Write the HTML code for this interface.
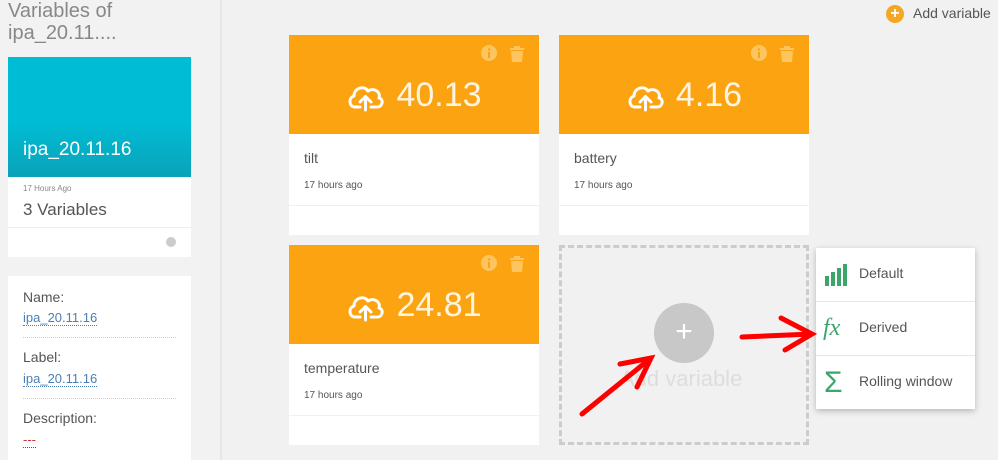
<!DOCTYPE html>
<html><head><meta charset="utf-8"><style>
*{margin:0;padding:0;box-sizing:border-box}
body{width:998px;height:460px;overflow:hidden;background:#f1f1f1;font-family:"Liberation Sans",sans-serif;position:relative;color:#555}
.side{position:absolute;left:0;top:0;width:222px;height:460px;background:#f2f2f2;border-right:2px solid #e6e6e6}
.abs{position:absolute}
.card{position:absolute;width:250px;height:200px;background:#fff}
.card .top{height:99px;background:#fca311;position:relative}
.card .val{position:absolute;left:0;right:0;top:40px;text-align:center;color:#fff4e0;font-size:34px;line-height:40px}
.card .val svg{vertical-align:-6px;margin-right:10px}
.card .ic{position:absolute;top:10px;right:14px}
.card .name{position:absolute;left:15px;top:115px;font-size:14px;color:#555}
.card .time{position:absolute;left:15px;top:145px;font-size:10px;color:#555}
.card .sep{position:absolute;left:0;right:0;top:170px;border-top:1px solid #f0f0f0}
.menu{position:absolute;left:816px;top:248px;width:159px;height:161px;background:#fff;box-shadow:0 2px 6px rgba(0,0,0,.25)}
.mi{height:54px;border-bottom:1px solid #e6e6e6;position:relative;font-size:14px;color:#555}
.mi span{position:absolute;left:43px;top:17px}
.lbl{font-size:14px;color:#555}
.lnk{font-size:13px;color:#4a7fb5;border-bottom:1px dotted #4a7fb5}
</style></head><body>
<div class="side">
<div class="abs" style="left:8px;top:0;font-size:20px;color:#888;line-height:22px">Variables of<br>ipa_20.11....</div>
<div class="abs" style="left:8px;top:57px;width:183px;height:120px;background:linear-gradient(#00bcd4 0%,#00bcd4 55%,#0aa2b8 100%)"></div>
<div class="abs" style="left:23px;top:139px;font-size:19px;color:#fff">ipa_20.11.16</div>
<div class="abs" style="left:8px;top:177px;width:183px;height:80px;background:#fff"></div>
<div class="abs" style="left:23px;top:184px;font-size:8px;color:#888">17 Hours Ago</div>
<div class="abs" style="left:23px;top:200px;font-size:17px;color:#555">3 Variables</div>
<div class="abs" style="left:8px;top:227px;width:183px;border-top:1px solid #eee"></div>
<div class="abs" style="left:166px;top:237px;width:10px;height:10px;border-radius:50%;background:#ccc"></div>
<div class="abs" style="left:8px;top:276px;width:183px;height:184px;background:#fff"></div>
<div class="abs lbl" style="left:23px;top:289px">Name:</div>
<div class="abs lnk" style="left:23px;top:310px">ipa_20.11.16</div>
<div class="abs" style="left:23px;top:337px;width:153px;border-top:1px dotted #ccc"></div>
<div class="abs lbl" style="left:23px;top:349px">Label:</div>
<div class="abs lnk" style="left:23px;top:371px">ipa_20.11.16</div>
<div class="abs" style="left:23px;top:398px;width:153px;border-top:1px dotted #ccc"></div>
<div class="abs lbl" style="left:23px;top:410px">Description:</div>
<div class="abs" style="left:23px;top:432px;font-size:13px;color:#c33;border-bottom:1px dotted #555">---</div>
</div>

<div class="abs" style="left:886px;top:5px;width:18px;height:18px;border-radius:50%;background:#f5a623;color:#fff;font-size:16px;line-height:18px;text-align:center;font-weight:bold">+</div>
<div class="abs" style="left:913px;top:5px;font-size:14px;color:#555">Add variable</div>

<svg width="0" height="0" style="position:absolute"><defs>
<g id="cloud"><path d="M14 27 H9 C3 27 2 18 8 16 C8 8 18 5 22 11 C28 7 35 12 33 18 C38 19 37 27 31 27 H25" fill="none" stroke="#fff" stroke-width="3" stroke-linecap="round" stroke-linejoin="round"/><path d="M19.5 30 V17 M14 22 L19.5 16.5 L25 22" fill="none" stroke="#fff" stroke-width="3" stroke-linecap="round" stroke-linejoin="round"/></g>
<g id="icons"><circle cx="8" cy="8" r="8" fill="#fdc55f"/><rect x="7" y="7" width="2" height="6" fill="#fca311"/><circle cx="8" cy="4.5" r="1.2" fill="#fca311"/><rect x="29" y="3" width="14" height="2" fill="#fdc55f"/><rect x="33" y="1" width="6" height="2" fill="#fdc55f"/><path d="M30 6 H42 L41 17 H31Z" fill="#fdc55f"/></g>
</defs></svg>

<div class="card" style="left:289px;top:35px"><div class="top"><svg class="ic" width="44" height="18"><use href="#icons"/></svg><div class="val"><svg width="40" height="32"><use href="#cloud"/></svg>40.13</div></div><div class="name">tilt</div><div class="time">17 hours ago</div><div class="sep"></div></div>
<div class="card" style="left:559px;top:35px"><div class="top"><svg class="ic" width="44" height="18"><use href="#icons"/></svg><div class="val"><svg width="40" height="32"><use href="#cloud"/></svg>4.16</div></div><div class="name">battery</div><div class="time">17 hours ago</div><div class="sep"></div></div>
<div class="card" style="left:289px;top:245px"><div class="top"><svg class="ic" width="44" height="18"><use href="#icons"/></svg><div class="val"><svg width="40" height="32"><use href="#cloud"/></svg>24.81</div></div><div class="name">temperature</div><div class="time">17 hours ago</div><div class="sep"></div></div>

<div class="abs" style="left:559px;top:245px;width:250px;height:200px;border:3px dashed #ccc"></div>
<div class="abs" style="left:620px;top:366px;font-size:22px;color:#ddd">Add variable</div>
<div class="abs" style="left:654px;top:303px;width:60px;height:60px;border-radius:50%;background:#c8c8c8;color:#fff;font-size:30px;line-height:58px;text-align:center">+</div>

<div class="menu">
<div class="mi"><svg class="abs" style="left:9px;top:14px" width="22" height="26"><rect x="0" y="14" width="4" height="10" fill="#3aa66a"/><rect x="6" y="10" width="4" height="14" fill="#3aa66a"/><rect x="12" y="6" width="4" height="18" fill="#3aa66a"/><rect x="18" y="2" width="4" height="22" fill="#3aa66a"/></svg><span>Default</span></div>
<div class="mi"><div class="abs" style="left:7px;top:13px;font-family:'Liberation Serif',serif;font-style:italic;font-size:24px;color:#3aa66a">fx</div><span>Derived</span></div>
<div class="mi" style="border:none"><div class="abs" style="left:8px;top:10px;font-size:30px;color:#3aa66a">Σ</div><span>Rolling window</span></div>
</div>

<svg class="abs" style="left:0;top:0" width="998" height="460">
<g stroke="#f00" stroke-width="5" fill="none" stroke-linecap="round">
<path d="M582 414 L651 358 M620 364 L651 358 L637 387"/>
<path d="M742 337 L812 334 M781 318 L812 334 L785 350"/>
</g></svg>
</body></html>
